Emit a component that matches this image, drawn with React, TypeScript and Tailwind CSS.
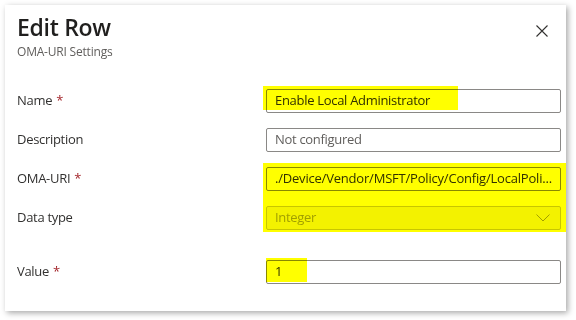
import React from "react";

function Row({
  label,
  required,
  children,
  className = "",
}: {
  label: string;
  required?: boolean;
  children: React.ReactNode;
  className?: string;
}) {
  return (
    <div className={"flex items-center h-6 " + className}>
      <div className="w-[249px] shrink-0 text-[13px] tracking-[-0.3px] text-[#323130]">
        {label}
        {required && <span className="text-[#a4262c] ml-[4px]">*</span>}
      </div>
      <div className="flex-1 min-w-0">{children}</div>
    </div>
  );
}

export default function App() {
  return (
    <div className="w-[576px] h-[320px] bg-white p-[5px] font-['Open_Sans','Noto_Sans',sans-serif]">
      <div className="relative w-[561px] h-[306px] bg-white shadow-[2px_2px_6px_rgba(0,0,0,0.35)] pl-3 pr-[5px]">
        <div className="flex justify-between pt-[7px]">
          <div>
            <h1 className="text-[23px] leading-[30px] font-semibold tracking-[-0.3px] text-[#201f1e]">Edit Row</h1>
            <p className="text-[12px] leading-[16px] tracking-[-0.2px] text-[#605e5c] mt-[2px]">OMA-URI Settings</p>
          </div>
          <button className="mt-[9px] mr-[9px] w-[20px] h-[20px] flex items-center justify-center">
            <svg width="12" height="12" viewBox="0 0 12 12" fill="none" stroke="#323130" strokeWidth="1.1">
              <path d="M0.5 0.5 L11.5 11.5 M11.5 0.5 L0.5 11.5" />
            </svg>
          </button>
        </div>

        <div className="mt-[29px] flex flex-col gap-[15px] text-[13px] tracking-[-0.3px]">
          <Row label="Name" required>
            <div className="h-6 border border-[#8a8886] rounded-[2px] px-2 flex items-center text-[#323130]">
              Enable Local Administrator
            </div>
          </Row>
          <Row label="Description">
            <div className="h-6 border border-[#8a8886] rounded-[2px] px-2 flex items-center text-[#605e5c]">
              Not configured
            </div>
          </Row>
          <Row label="OMA-URI" required>
            <div className="h-6 border border-[#8a8886] rounded-[2px] px-2 flex items-center text-[#323130] whitespace-nowrap overflow-hidden">
              <span className="tracking-[-0.2px]">./Device/Vendor/MSFT/Policy/Config/LocalPoli...</span>
            </div>
          </Row>
          <Row label="Data type">
            <div className="h-6 border border-[#c8c6c4] bg-[#f3f2f1] rounded-[2px] pl-2 pr-[10px] flex items-center justify-between text-[#a19f9d]">
              <span>Integer</span>
              <svg width="14" height="8" viewBox="0 0 14 8" fill="none" stroke="#a19f9d" strokeWidth="1">
                <path d="M0.5 0.5 L7 7 L13.5 0.5" />
              </svg>
            </div>
          </Row>
          <Row label="Value" required className="mt-[15px]">
            <div className="h-6 border border-[#8a8886] rounded-[2px] px-2 flex items-center text-[#323130]">
              1
            </div>
          </Row>
        </div>

        <div className="absolute left-[258px] top-[81px] w-[195px] h-6 bg-[#ffff00] mix-blend-multiply" />
        <div className="absolute left-[258px] top-[158px] w-[303px] h-[69px] bg-[#ffff00] mix-blend-multiply" />
        <div className="absolute left-[261px] top-[253px] w-[41px] h-6 bg-[#ffff00] mix-blend-multiply" />
      </div>
    </div>
  );
}
